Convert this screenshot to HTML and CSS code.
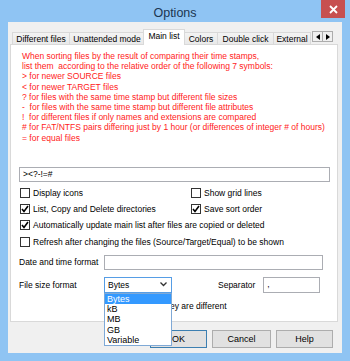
FILE: index.html
```html
<!DOCTYPE html>
<html lang="en">
    <head>
        <title>Options</title>
        <link rel="stylesheet" href="styles.css">
    </head>
    <body>
        <div class="window">
            <!-- Title bar -->
            <div class="titlebar">
                <span></span>
                <span class="title">Options</span>
                <div class="close">
                    <svg width="9" height="9" viewBox="0 0 9 9"><path d="M1 1 L8 8 M8 1 L1 8" stroke="#fff" stroke-width="1.8"/></svg>
                </div>
            </div>

            <div class="client">
                <!-- Tabs -->
                <div class="tabs">
                    <div class="tab w1">Different files</div>
                    <div class="tab w2">Unattended mode</div>
                    <div class="tab active w3">Main list</div>
                    <div class="tab w4">Colors</div>
                    <div class="tab w5">Double click</div>
                    <div class="tab w6">External</div>
                    <div class="spin">
                        <div class="spin-btn"><svg width="4" height="6" viewBox="0 0 4 6"><path d="M4 0 L0 3 L4 6 Z" fill="#000"/></svg></div>
                        <div class="spin-btn"><svg width="4" height="6" viewBox="0 0 4 6"><path d="M0 0 L4 3 L0 6 Z" fill="#000"/></svg></div>
                    </div>
                </div>

                <!-- Main list page -->
                <div class="panel">
                    <div class="hint">When sorting files by the result of comparing their time stamps,
list them  according to the relative order of the following 7 symbols:
&gt; for newer SOURCE files
&lt; for newer TARGET files
? for files with the same time stamp but different file sizes
-  for files with the same time stamp but different file attributes
!  for different files if only names and extensions are compared
# for FAT/NTFS pairs differing just by 1 hour (or differences of integer # of hours)
= for equal files</div>

                    <div class="textbox order">&gt;&lt;?-!=#</div>

                    <div class="checks">
                        <div class="check"><span class="box"></span>Display icons</div>
                        <div class="check"><span class="box"></span>Show grid lines</div>
                        <div class="check"><span class="box"><svg width="10" height="10" viewBox="0 0 10 10"><path d="M2 5 L4 7.5 L8 2" stroke="#000" stroke-width="1.6" fill="none"/></svg></span>List, Copy and Delete directories</div>
                        <div class="check"><span class="box"><svg width="10" height="10" viewBox="0 0 10 10"><path d="M2 5 L4 7.5 L8 2" stroke="#000" stroke-width="1.6" fill="none"/></svg></span>Save sort order</div>
                        <div class="check wide"><span class="box"><svg width="10" height="10" viewBox="0 0 10 10"><path d="M2 5 L4 7.5 L8 2" stroke="#000" stroke-width="1.6" fill="none"/></svg></span>Automatically update main list after files are copied or deleted</div>
                        <div class="check wide gap"><span class="box"></span>Refresh after changing the files (Source/Target/Equal) to be shown</div>
                    </div>

                    <div class="field-row date-row">
                        <span class="label">Date and time format</span>
                        <div class="textbox date"></div>
                    </div>

                    <div class="field-row size-row">
                        <span class="label">File size format</span>
                        <div class="select-wrap">
                            <div class="select">
                                <span>Bytes</span>
                                <svg width="7" height="5" viewBox="0 0 7 5"><path d="M0.5 0.5 L3.5 3.5 L6.5 0.5" stroke="#333" stroke-width="1.3" fill="none"/></svg>
                            </div>
                            <ul class="dropdown">
                                <li class="selected">Bytes</li>
                                <li>kB</li>
                                <li>MB</li>
                                <li>GB</li>
                                <li>Variable</li>
                            </ul>
                        </div>
                        <span class="label sep">Separator</span>
                        <div class="textbox separator">,</div>
                    </div>

                    <div class="hidden-row">ey are different</div>
                </div>

                <!-- Buttons -->
                <div class="buttons">
                    <div class="button default">OK</div>
                    <div class="button cancel">Cancel</div>
                    <div class="button">Help</div>
                </div>
            </div>
        </div>
    </body>
</html>
```

FILE: styles.css
```css
body { margin: 0; font-family: "Liberation Sans", Arial, sans-serif; font-size: 8.5px; color: #000; }

.window { width: 350px; height: 361px; background-color: #8fc4f3; box-sizing: border-box; padding-bottom: 8px; }

/* Title bar */
.titlebar { height: 22px; display: grid; grid-template-columns: 1fr auto 1fr; align-items: start; }
.title { font-size: 12.5px; color: #1b3550; margin-top: 6px; }
.close { justify-self: end; margin-right: 5px; width: 24px; height: 18px; background-color: #c75050; display: flex; align-items: center; justify-content: center; }

/* Client area */
.client { margin: 0 8px; height: 331px; background-color: #f0f0f0; box-sizing: border-box; padding-top: 7px; }

/* Tabs */
.tabs { display: flex; align-items: flex-end; height: 15px; margin-left: 4px; position: relative; z-index: 1; }
.tab {
    height: 12px;
    box-sizing: border-box;
    border: 1px solid #d9d9d9;
    border-bottom: none;
    margin-right: -1px;
    background: linear-gradient(#f3f3f3, #e9e9e9);
    text-align: center;
    line-height: 12px;
    white-space: nowrap;
    overflow: hidden;
}
.tab.active { background: #fff; margin-bottom: -1px; height: 16px; line-height: 13px; margin-left: -1px; margin-right: -1px; position: relative; }
.w1 { width: 58px; }
.w2 { width: 76px; }
.w3 { width: 42px; }
.w4 { width: 34px; }
.w5 { width: 57px; }
.w6 { width: 38px; }
.spin { display: flex; margin-left: 2px; margin-bottom: 2px; }
.spin-btn { width: 11px; height: 11px; box-sizing: border-box; border: 1px solid #acacac; background: #f0f0f0; display: flex; align-items: center; justify-content: center; margin-right: -1px; }

/* Panel */
.panel {
    margin-left: 2px;
    width: 328px;
    height: 278px;
    box-sizing: border-box;
    border: 1px solid #d9d9d9;
    background-color: #fff;
    padding: 6px 8px 0 8px;
}
.hint { color: #ff1a1a; white-space: pre; line-height: 10.2px; margin-left: 3px; }

.textbox { border: 1px solid #abadb3; box-sizing: border-box; background: #fff; padding-left: 3px; }
.order { margin-top: 24px; width: 311px; height: 15px; line-height: 13px; }

.checks { display: grid; grid-template-columns: 171px 1fr; row-gap: 6px; margin-top: 6px; }
.check { display: flex; align-items: center; height: 10px; white-space: nowrap; }
.check.wide { grid-column: 1 / 3; }
.check.gap { margin-top: 1px; }
.box { width: 10px; height: 10px; box-sizing: border-box; border: 1px solid #333; margin: 0 3px 0 1px; display: flex; align-items: center; justify-content: center; }
.box svg { margin: -1px; }

.field-row { display: flex; align-items: center; }
.label { width: 85px; flex-shrink: 0; }
.date-row { margin-top: 8px; }
.date { width: 219px; height: 15px; }
.size-row { margin-top: 7px; }

.select-wrap { position: relative; }
.select { width: 68px; height: 16px; box-sizing: border-box; border: 1px solid #569de5; background: #fff; display: flex; align-items: center; justify-content: space-between; padding: 0 4px 0 3px; }
.dropdown {
    position: absolute;
    top: 16px;
    left: 0;
    width: 68px;
    box-sizing: border-box;
    margin: 0;
    padding: 0;
    list-style: none;
    border: 1px solid #7fa9d6;
    background: #fff;
    z-index: 2;
}
.dropdown li { height: 10.3px; line-height: 10px; padding-left: 2px; font-size: 9px; }
.dropdown li.selected { background-color: #3399ff; color: #fff; }

.sep { width: auto; margin-left: 46px; margin-right: 8px; }
.separator { width: 57px; height: 16px; line-height: 13px; flex-shrink: 0; }

.hidden-row { margin-left: 151px; white-space: nowrap; margin-top: 8px; }

/* Buttons */
.buttons { display: flex; justify-content: flex-end; gap: 5px; margin-top: 8px; padding-right: 9px; }
.button { width: 57px; height: 18px; box-sizing: border-box; border: 1px solid #adadad; background: #e1e1e1; text-align: center; line-height: 16px; font-size: 9px; }
.button.cancel { width: 59px; }
.button.default { border-color: #3c7fb1; }
```
